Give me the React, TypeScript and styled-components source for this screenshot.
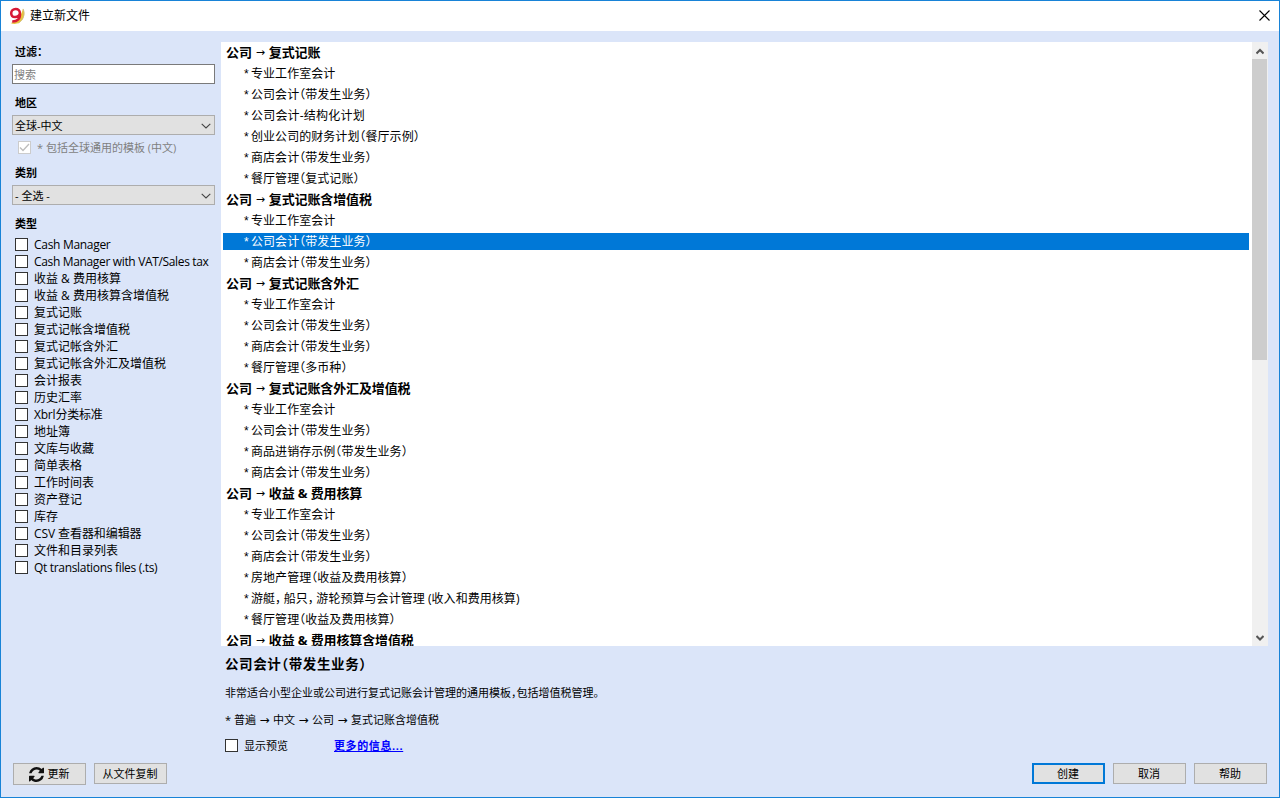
import React from "react";
import styled, { createGlobalStyle } from "styled-components";

const Global = createGlobalStyle`
  * { box-sizing: border-box; }
  html, body { margin: 0; padding: 0; background: #fff; overflow: hidden; }
  body {
    font-family: "Open Sans", "Noto Sans CJK SC", sans-serif;
    font-size: 12px;
    color: #000;
    font-feature-settings: "halt";
  }
`;

const Window = styled.div`
  width: 1280px;
  height: 798px;
  border: 1px solid #1883d7;
  background: #dbe5f9;
  display: flex;
  flex-direction: column;
`;

const TitleBar = styled.header`
  height: 30px;
  flex: none;
  background: #fff;
  display: flex;
  align-items: center;
  padding: 0 9px 1px 8px;
  gap: 4px;
`;

const Title = styled.span`
  flex: 1;
  line-height: 18px;
  padding-top: 1px;
`;

const Body = styled.div`
  display: flex;
  height: 721px;
  flex: none;
`;

const Sidebar = styled.aside`
  width: 220px;
  flex: none;
  padding: 0 6px 0 11px;
  display: flex;
  flex-direction: column;
`;

const GroupLabel = styled.div<{ $top: number }>`
  margin-top: ${(p) => p.$top}px;
  height: 16px;
  line-height: 16px;
  font-size: 11px;
  font-weight: 700;
  padding-left: 3px;
`;

const Search = styled.input`
  margin: 4px 0 0;
  height: 20px;
  width: 203px;
  border: 1px solid #7a7a7a;
  background: #fff;
  padding: 0 1px;
  font: inherit;
  font-size: 11px;
  outline: none;
  &::placeholder { color: #7f7f7f; opacity: 1; }
`;

const Select = styled.div<{ $top: number }>`
  margin-top: ${(p) => p.$top}px;
  width: 203px;
  height: 20px;
  border: 1px solid #adadad;
  background: #e1e1e1;
  display: flex;
  align-items: center;
  justify-content: space-between;
  padding: 1px 3px 0 2px;
  font-size: 11px;
  line-height: 17px;
`;

const Include = styled.label`
  display: flex;
  align-items: center;
  height: 17px;
  margin-top: 4px;
  padding-left: 6px;
  gap: 6px;
  font-size: 11px;
  line-height: 15px;
  color: #7f7f7f;
  white-space: pre;
`;

const Box = styled.span<{ $off?: boolean }>`
  width: 13px;
  height: 13px;
  flex: none;
  display: flex;
  background: #fff;
  border: 1px solid ${(p) => (p.$off ? "#cccccc" : "#333333")};
`;

const Types = styled.div`
  margin-top: 4px;
  padding-left: 3px;
`;

const TypeRow = styled.label`
  height: 17px;
  display: flex;
  align-items: center;
  gap: 6px;
  line-height: 17px;
  white-space: nowrap;
`;

const TypeName = styled.span<{ $spacing?: number }>`
  letter-spacing: ${(p) => p.$spacing ?? 0}px;
`;

const Main = styled.main`
  width: 1047px;
  flex: none;
  display: flex;
  flex-direction: column;
`;

const ListPane = styled.div`
  margin-top: 11px;
  height: 604px;
  flex: none;
  background: #fff;
  display: flex;
`;

const List = styled.div`
  flex: 1;
  overflow: hidden;
  display: flex;
  flex-direction: column;
`;

const Heading = styled.div`
  height: 21px;
  flex: none;
  line-height: 21px;
  padding-left: 5px;
  font-weight: 700;
  font-size: 13px;
  letter-spacing: -0.12px;
  white-space: pre;
  display: flex;
`;

const Arrow = styled.span<{ $w: number; $size?: number }>`
  width: ${(p) => p.$w}px;
  text-align: center;
  font-family: "DejaVu Sans", sans-serif;
  font-weight: 400;
  font-size: ${(p) => p.$size ?? 12}px;
`;

const Item = styled.div<{ $active?: boolean }>`
  height: 17px;
  flex: none;
  line-height: 18px;
  margin: 2px 3px 2px 2px;
  padding-left: 21px;
  display: flex;
  white-space: pre;
  background: ${(p) => (p.$active ? "#0078d7" : "transparent")};
  color: ${(p) => (p.$active ? "#fff" : "#000")};
`;

const Star = styled.span`
  width: 7px;
  flex: none;
  font-family: "Liberation Sans", sans-serif;
  font-size: 12px;
`;

const Comma = styled.span`
  padding-right: 2.5px;
`;

const ItemName = styled.span<{ $spacing?: number }>`
  letter-spacing: ${(p) => p.$spacing ?? 0.05}px;
`;

const ScrollBar = styled.div`
  width: 16px;
  flex: none;
  background: #f0f0f0;
  display: flex;
  flex-direction: column;
`;

const ScrollButton = styled.div`
  height: 17px;
  display: flex;
  align-items: center;
  justify-content: center;
  padding: 1px 1px 0 0;
`;

const Track = styled.div`
  flex: 1;
`;

const Thumb = styled.div`
  width: 15px;
  height: 301px;
  background: #cdcdcd;
`;

const DetailTitle = styled.h2`
  margin: 8px 0 0;
  padding-left: 4px;
  height: 20px;
  line-height: 20px;
  font-size: 13.5px;
  font-weight: 700;
  letter-spacing: 0.6px;
`;

const DetailText = styled.p<{ $top: number }>`
  margin: ${(p) => p.$top}px 0 0;
  padding-left: 4px;
  height: 16px;
  line-height: 16px;
  font-size: 11px;
  white-space: pre;
  display: flex;
`;

const Options = styled.div`
  margin-top: 9px;
  height: 16px;
  display: flex;
  align-items: center;
  padding-left: 4px;
  font-size: 11px;
`;

const Preview = styled.label`
  width: 109px;
  display: flex;
  align-items: center;
  gap: 6px;
`;

const More = styled.a`
  color: #0000ff;
  font-weight: 700;
  text-decoration: underline;
  letter-spacing: 0.6px;
`;

const Footer = styled.footer`
  display: flex;
  gap: 8px;
  padding: 11px 12px 0;
`;

const Spacer = styled.div`
  flex: 1;
`;

const Button = styled.button<{ $primary?: boolean; $tall?: boolean }>`
  width: 73px;
  height: ${(p) => (p.$tall ? 22 : 21)}px;
  border: ${(p) => (p.$primary ? "2px solid #0078d7" : "1px solid #adadad")};
  background: #e1e1e1;
  padding: 0 1px 0 0;
  font: inherit;
  font-size: 11px;
  line-height: 16px;
  color: #000;
  display: flex;
  align-items: center;
  justify-content: center;
  gap: 4px;
`;

const Logo = () => (
  <svg width="17" height="18" viewBox="0 0 17 18">
    <path d="M14 1.500C16.500 6 15.500 12 10.500 15.500C7.500 17.400 4 17.300 1.500 16C7 15.500 12 10 14 1.500Z" fill="#e8c53d" />
    <path d="M14.200 2C16.200 7 14.500 13 9.500 16" fill="none" stroke="#c9b98a" strokeWidth=".8" />
    <path d="M10.900 6.200C10.900 3.500 9.200 2 6.700 2C4 2 2.200 3.800 2.200 6.200C2.200 8.600 3.900 10 6.100 10C8.800 10 10.500 8.200 10.900 6.200C11.600 11.600 8.500 14.700 3.200 14.600" fill="none" stroke="#d71935" strokeWidth="2.500" />
  </svg>
);

const CloseIcon = () => (
  <svg width="11" height="11" viewBox="0 0 11 11">
    <path d="M.5.5L10.500 10.500M10.500.5L.5 10.500" stroke="#000" strokeWidth="1.100" />
  </svg>
);

const Chevron = () => (
  <svg width="10" height="6" viewBox="0 0 10 6">
    <path d="M.7.8L5 5L9.300.8" fill="none" stroke="#444" strokeWidth="1.100" />
  </svg>
);

const ScrollArrow = ({ down }: { down?: boolean }) => (
  <svg width="8" height="7" viewBox="0 0 8 7">
    <path d={down ? "M.5 1L4 4.500L7.500 1" : "M.5 5.500L4 2L7.500 5.500"} fill="none" stroke="#555" strokeWidth="2" />
  </svg>
);

const RefreshIcon = () => (
  <svg width="15" height="15" viewBox="0 0 1536 1536">
    <path fill="#111" d="M1511 928q0 5-1 7-64 268-268 434.500T764 1536q-146 0-282.500-55T238 1324l-129 129q-19 19-45 19t-45-19-19-45V960q0-26 19-45t45-19h448q26 0 45 19t19 45-19 45l-137 137q71 66 161 102t187 36q134 0 250-65t186-179q11-17 53-117 8-23 30-23h192q13 0 22.500 9.500t9.500 22.500zm25-800v448q0 26-19 45t-45 19h-448q-26 0-45-19t-19-45 19-45l138-138Q969 256 768 256q-134 0-250 65T332 500q-11 17-53 117-8 23-30 23H50q-13 0-22.500-9.500T18 608v-7q65-268 270-434.500T768 0q146 0 284 55.500T1297 212l130-129q19-19 45-19t45 19 19 45z" />
  </svg>
);

const types: { text: string; spacing?: number }[] = [
  { text: "Cash Manager", spacing: -0.3 },
  { text: "Cash Manager with VAT/Sales tax", spacing: -0.34 },
  { text: "收益 & 费用核算" },
  { text: "收益 & 费用核算含增值税" },
  { text: "复式记账" },
  { text: "复式记帐含增值税" },
  { text: "复式记帐含外汇" },
  { text: "复式记帐含外汇及增值税" },
  { text: "会计报表" },
  { text: "历史汇率" },
  { text: "Xbrl分类标准", spacing: -0.2 },
  { text: "地址簿" },
  { text: "文库与收藏" },
  { text: "简单表格" },
  { text: "工作时间表" },
  { text: "资产登记" },
  { text: "库存" },
  { text: "CSV 查看器和编辑器", spacing: -0.08 },
  { text: "文件和目录列表" },
  { text: "Qt translations files (.ts)", spacing: -0.32 },
];

const groups: { name: string; items: string[] }[] = [
  {
    name: "复式记账",
    items: ["专业工作室会计", "公司会计（带发生业务）", "公司会计-结构化计划", "创业公司的财务计划（餐厅示例）", "商店会计（带发生业务）", "餐厅管理（复式记账）"],
  },
  { name: "复式记账含增值税", items: ["专业工作室会计", "公司会计（带发生业务）", "商店会计（带发生业务）"] },
  { name: "复式记账含外汇", items: ["专业工作室会计", "公司会计（带发生业务）", "商店会计（带发生业务）", "餐厅管理（多币种）"] },
  {
    name: "复式记账含外汇及增值税",
    items: ["专业工作室会计", "公司会计（带发生业务）", "商品进销存示例（带发生业务）", "商店会计（带发生业务）"],
  },
  {
    name: "收益 & 费用核算",
    items: [
      "专业工作室会计",
      "公司会计（带发生业务）",
      "商店会计（带发生业务）",
      "房地产管理（收益及费用核算）",
      "游艇，船只，游轮预算与会计管理 (收入和费用核算)",
      "餐厅管理（收益及费用核算）",
    ],
  },
  { name: "收益 & 费用核算含增值税", items: [] },
];

const ItemText = ({ text }: { text: string }) => (
  <ItemName $spacing={text.includes("-") ? 0.2 : undefined}>
    {text.split("，").map((part, i) => (
      <React.Fragment key={i}>
        {i > 0 && <Comma>，</Comma>}
        {part}
      </React.Fragment>
    ))}
  </ItemName>
);

export default function App() {
  return (
    <>
      <Global />
      <Window>
        <TitleBar>
          <Logo />
          <Title>建立新文件</Title>
          <CloseIcon />
        </TitleBar>
        <Body>
          <Sidebar>
            <GroupLabel $top={13}>过滤：</GroupLabel>
            <Search placeholder="搜索" />
            <GroupLabel $top={11}>地区</GroupLabel>
            <Select $top={4}>
              全球-中文
              <Chevron />
            </Select>
            <Include>
              <Box $off>
                <svg width="11" height="11" viewBox="0 0 11 11">
                  <path d="M1 5.500L4 8.500L10 2" fill="none" stroke="#bdbdbd" strokeWidth="1.300" />
                </svg>
              </Box>
              <span>* 包括全球通用的模板 (中文)</span>
            </Include>
            <GroupLabel $top={9}>类别</GroupLabel>
            <Select $top={4}>
              - 全选 -
              <Chevron />
            </Select>
            <GroupLabel $top={11}>类型</GroupLabel>
            <Types>
              {types.map((t) => (
                <TypeRow key={t.text}>
                  <Box />
                  <TypeName $spacing={t.spacing}>{t.text}</TypeName>
                </TypeRow>
              ))}
            </Types>
          </Sidebar>
          <Main>
            <ListPane>
              <List>
                {groups.map((g, gi) => (
                  <React.Fragment key={g.name}>
                    <Heading>
                      公司<Arrow $w={17} $size={11}>→</Arrow>
                      {g.name}
                    </Heading>
                    {g.items.map((it, i) => (
                      <Item key={it} $active={gi === 1 && i === 1}>
                        <Star>*</Star>
                        <ItemText text={it} />
                      </Item>
                    ))}
                  </React.Fragment>
                ))}
              </List>
              <ScrollBar>
                <ScrollButton>
                  <ScrollArrow />
                </ScrollButton>
                <Track>
                  <Thumb />
                </Track>
                <ScrollButton>
                  <ScrollArrow down />
                </ScrollButton>
              </ScrollBar>
            </ListPane>
            <DetailTitle>公司会计（带发生业务）</DetailTitle>
            <DetailText $top={11}>非常适合小型企业或公司进行复式记账会计管理的通用模板，包括增值税管理。</DetailText>
            <DetailText $top={11}>
              * 普遍<Arrow $w={17}>→</Arrow>中文<Arrow $w={17}>→</Arrow>公司<Arrow $w={17}>→</Arrow>复式记账含增值税
            </DetailText>
            <Options>
              <Preview>
                <Box />
                显示预览
              </Preview>
              <More>更多的信息...</More>
            </Options>
          </Main>
        </Body>
        <Footer>
          <Button $tall>
            <RefreshIcon />
            更新
          </Button>
          <Button>从文件复制</Button>
          <Spacer />
          <Button $primary>创建</Button>
          <Button>取消</Button>
          <Button>帮助</Button>
        </Footer>
      </Window>
    </>
  );
}
